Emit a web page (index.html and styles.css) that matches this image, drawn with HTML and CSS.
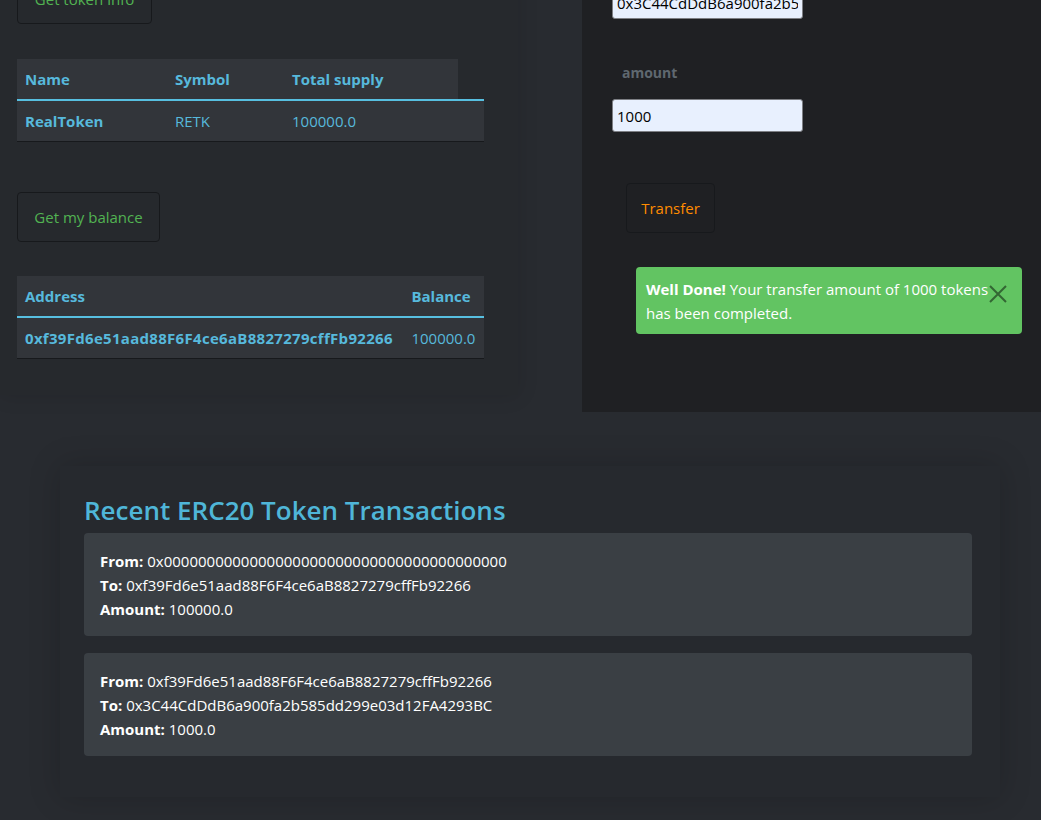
FILE: index.html
```html
<!DOCTYPE html>
<html>
<head>
<meta charset="utf-8">
<title>ERC20 Token</title>
<link rel="stylesheet" href="styles.css">
</head>
<body>
<div class="top">
  <section class="left-panel">
    <button class="btn btn-green">Get token info</button>
    <table class="tbl tbl-token">
      <colgroup><col class="c1"><col class="c2"><col class="c3"><col></colgroup>
      <thead><tr><th>Name</th><th>Symbol</th><th>Total supply</th><th class="blank"></th></tr></thead>
      <tbody><tr><td class="b">RealToken</td><td>RETK</td><td>100000.0</td><td></td></tr></tbody>
    </table>
    <button class="btn btn-green btn-balance">Get my balance</button>
    <table class="tbl tbl-balance">
      <thead><tr><th>Address</th><th>Balance</th></tr></thead>
      <tbody><tr><td class="b addr">0xf39Fd6e51aad88F6F4ce6aB8827279cffFb92266</td><td>100000.0</td></tr></tbody>
    </table>
  </section>
  <section class="right-panel">
    <input class="field" type="text" value="0x3C44CdDdB6a900fa2b585dd299e03d12FA4293BC">
    <label class="label">amount</label>
    <input class="field field-amount" type="text" value="1000">
    <button class="btn btn-orange">Transfer</button>
    <div class="alert">
      <strong>Well Done!</strong> Your transfer amount of 1000 tokens<br>has been completed.
      <span class="close"><svg width="20" height="20" viewBox="0 0 20 20"><path d="M2 2 L18 18 M18 2 L2 18" stroke="currentColor" stroke-width="2" fill="none"/></svg></span>
    </div>
  </section>
</div>
<section class="card">
  <h3 class="card-title">Recent ERC20 Token Transactions</h3>
  <div class="tx">
    <div><b>From:</b> 0x0000000000000000000000000000000000000000</div>
    <div><b>To:</b> 0xf39Fd6e51aad88F6F4ce6aB8827279cffFb92266</div>
    <div><b>Amount:</b> 100000.0</div>
  </div>
  <div class="tx">
    <div><b>From:</b> 0xf39Fd6e51aad88F6F4ce6aB8827279cffFb92266</div>
    <div><b>To:</b> 0x3C44CdDdB6a900fa2b585dd299e03d12FA4293BC</div>
    <div><b>Amount:</b> 1000.0</div>
  </div>
</section>
</body>
</html>
```

FILE: styles.css
```css
* { box-sizing: border-box; }
html, body { margin: 0; padding: 0; }
body {
  background: #282b30;
  font-family: "Open Sans", "Noto Sans", sans-serif;
  font-size: 15px;
  line-height: 24px;
  color: #fff;
  overflow: hidden;
  height: 820px;
}
.top {
  display: flex;
  align-items: flex-start;
  gap: 64px;
  margin-top: -40px;
}
.left-panel {
  width: 518px;
  background: #26292d;
  padding: 14px 0 36px 17px;
  box-shadow: 0 0 20px rgba(0,0,0,0.12);
}
.btn {
  display: block;
  height: 50px;
  padding: 0 16px;
  background: transparent;
  border: 1px solid #17191c;
  border-radius: 4px;
  font-family: inherit;
  font-size: 15px;
}
.btn-green { color: #52b352; width: 135px; }
.btn-balance { width: 143px; margin-top: 50px; }
.tbl {
  border-collapse: collapse;
  width: 467px;
  color: #57b9dc;
  margin-top: 35px;
}
.c1 { width: 150px; }
.c2 { width: 117px; }
.c3 { width: 174px; }
.tbl-balance { margin-top: 34px; }
.tbl th, .tbl td {
  text-align: left;
  padding: 8px 8px;
  height: 40px;
  white-space: nowrap;
  font-weight: 400;
}
.tbl th {
  background: #32353a;
  font-weight: 700;
  border-bottom: 2px solid #57bfe0;
}
.tbl th.blank { background: transparent; }
.tbl td {
  background: #32353a;
  border-bottom: 1px solid #17191c;
}
.tbl td.b { font-weight: 700; }
.tbl td.addr { letter-spacing: 0.3px; }

.right-panel {
  flex: 1;
  background: #1f2023;
  height: 452px;
  padding: 26px 0 0 30px;
  position: relative;
}
.field {
  display: block;
  width: 191px;
  height: 33px;
  background: #e8f0fe;
  border: 1px solid #7d7f84;
  border-radius: 3px;
  padding: 0 4px;
  font-family: inherit;
  font-size: 15px;
  color: #000;
}
.label {
  display: block;
  margin: 42px 0 0 10px;
  color: #5f6870;
  font-weight: 700;
  font-size: 14px;
}
.field-amount { margin-top: 14px; }
.btn-orange { color: #ff8c00; width: 89px; margin: 51px 0 0 14px; padding: 0; }
.alert {
  position: relative;
  margin: 34px 0 0 24px;
  width: 386px;
  background: #62c462;
  border-radius: 4px;
  padding: 10px 10px 9px;
  color: #fff;
  font-size: 15px;
}
.alert strong { font-weight: 700; }
.close {
  position: absolute;
  left: 352px;
  top: 17px;
  color: #336633;
  line-height: 0;
}
.card {
  width: 940px;
  margin: 54px 0 0 60px;
  background: #26292e;
  padding: 27px 28px 41px 24px;
  box-shadow: 0 0 30px rgba(0,0,0,0.18);
}
.card-title {
  margin: 0 0 6px;
  font-size: 26px;
  line-height: 34px;
  font-weight: 600;
  color: #4fb6d8;
}
.tx {
  background: #3a3f44;
  border-radius: 4px;
  padding: 16px 16px 15px;
  font-size: 15px;
}
.tx + .tx { margin-top: 17px; }
.tx b { font-weight: 700; }
```
